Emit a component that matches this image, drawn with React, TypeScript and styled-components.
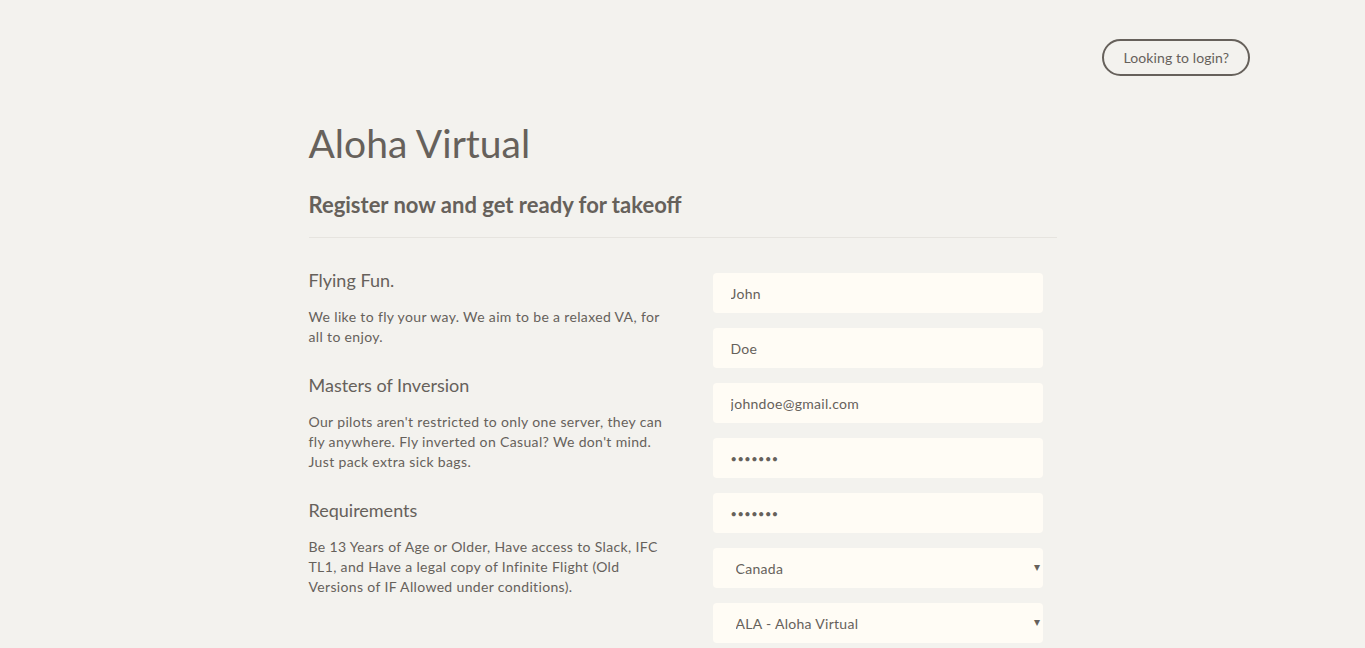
import React from "react";
import styled, { createGlobalStyle } from "styled-components";

const GlobalStyle = createGlobalStyle`
  html, body {
    margin: 0;
    padding: 0;
    background: #f3f2ee;
    color: #66615b;
    font-family: "Lato", "Noto Sans", sans-serif;
  }
  * { box-sizing: border-box; }
`;

const Page = styled.div`
  min-height: 648px;
  background: #f3f2ee;
`;

const Nav = styled.nav`
  display: flex;
  justify-content: flex-end;
  padding: 39px 115px 0 0;
`;

const LoginButton = styled.button`
  height: 37px;
  padding: 0 19px;
  border: 2px solid #66615b;
  border-radius: 20px;
  background: transparent;
  color: #66615b;
  font-family: inherit;
  font-size: 14px;
  letter-spacing: 0.1px;
  cursor: pointer;
`;

const Container = styled.main`
  width: 748px;
  margin: 0 auto;
  padding-top: 39px;
`;

const Title = styled.h1`
  margin: 0;
  font-size: 39px;
  font-weight: 400;
  line-height: 56px;
`;

const Subtitle = styled.h2`
  margin: 19px 0 0;
  font-size: 22px;
  font-weight: 700;
  line-height: 30px;
`;

const Divider = styled.hr`
  margin: 17px 0 0;
  border: 0;
  border-top: 1px solid #e6e4df;
`;

const Columns = styled.div`
  display: grid;
  grid-template-columns: 360px 330px;
  column-gap: 45px;
  padding-top: 35px;
  margin-left: -1px;
`;

const Info = styled.div`
  display: flex;
  flex-direction: column;
  margin-top: -6px;
  padding-left: 1px;
`;

const Section = styled.section`
  margin-bottom: 25px;
`;

const SectionTitle = styled.h3`
  margin: 0;
  font-size: 18px;
  font-weight: 400;
  line-height: 26px;
`;

const SectionText = styled.p`
  margin: 14px 0 0;
  font-size: 14px;
  line-height: 20px;
  letter-spacing: 0.35px;
`;

const Form = styled.form`
  display: flex;
  flex-direction: column;
  gap: 15px;
`;

const Field = styled.input`
  height: 40px;
  width: 100%;
  padding: 0 18px;
  border: 0;
  border-radius: 4px;
  background: #fffcf5;
  color: #66615b;
  font-family: inherit;
  font-size: 14px;
  letter-spacing: 0.3px;
  outline: none;
`;

const PasswordField = styled(Field)`
  font-size: 11px;
  letter-spacing: 0.5px;
`;

const SelectWrap = styled.div`
  position: relative;
  &::after {
    content: "▾";
    position: absolute;
    right: 3px;
    top: 11px;
    font-size: 12px;
    color: #66615b;
    pointer-events: none;
  }
`;

const Select = styled.select`
  appearance: none;
  -webkit-appearance: none;
  height: 40px;
  width: 100%;
  padding: 0 23px;
  border: 0;
  border-radius: 4px;
  background: #fffcf5;
  color: #66615b;
  font-family: inherit;
  font-size: 14px;
  letter-spacing: 0.3px;
  outline: none;
`;

const sections = [
  {
    title: "Flying Fun.",
    text: "We like to fly your way. We aim to be a relaxed VA, for all to enjoy.",
  },
  {
    title: "Masters of Inversion",
    text: "Our pilots aren't restricted to only one server, they can fly anywhere. Fly inverted on Casual? We don't mind. Just pack extra sick bags.",
  },
  {
    title: "Requirements",
    text: "Be 13 Years of Age or Older, Have access to Slack, IFC TL1, and Have a legal copy of Infinite Flight (Old Versions of IF Allowed under conditions).",
  },
];

const App: React.FC = () => {
  return (
    <Page>
      <GlobalStyle />
      <Nav>
        <LoginButton type="button">Looking to login?</LoginButton>
      </Nav>
      <Container>
        <Title>Aloha Virtual</Title>
        <Subtitle>Register now and get ready for takeoff</Subtitle>
        <Divider />
        <Columns>
          <Info>
            {sections.map((s) => (
              <Section key={s.title}>
                <SectionTitle>{s.title}</SectionTitle>
                <SectionText>{s.text}</SectionText>
              </Section>
            ))}
          </Info>
          <Form onSubmit={(e) => e.preventDefault()}>
            <Field defaultValue="John" />
            <Field defaultValue="Doe" />
            <Field type="email" defaultValue="johndoe@gmail.com" />
            <PasswordField type="password" defaultValue="1234567" />
            <PasswordField type="password" defaultValue="1234567" />
            <SelectWrap>
              <Select defaultValue="CA">
                <option value="CA">Canada</option>
                <option value="US">United States</option>
              </Select>
            </SelectWrap>
            <SelectWrap>
              <Select defaultValue="ALA">
                <option value="ALA">ALA - Aloha Virtual</option>
              </Select>
            </SelectWrap>
          </Form>
        </Columns>
      </Container>
    </Page>
  );
};

export default App;
